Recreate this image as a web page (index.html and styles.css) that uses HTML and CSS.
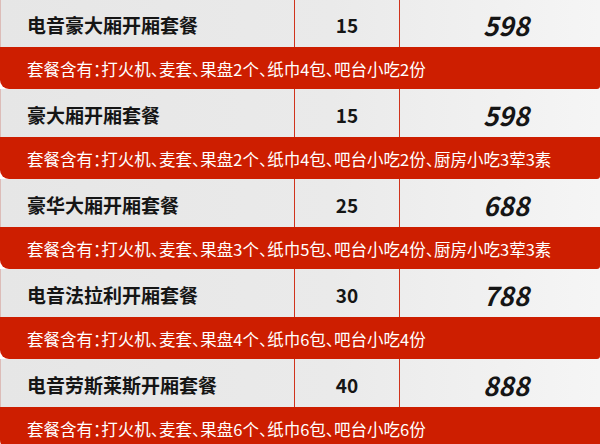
FILE: index.html
```html
<!DOCTYPE html>
<html lang="zh-CN">
<head>
<meta charset="utf-8">
<link rel="stylesheet" href="styles.css">
</head>
<body>
<div class="list">
  <section class="pkg">
    <div class="row">
      <div class="name">电音豪大厢开厢套餐</div>
      <div class="qty">15</div>
      <div class="price">598</div>
    </div>
    <div class="desc">套餐含有：打火机、麦套、果盘2个、纸巾4包、吧台小吃2份</div>
  </section>
  <section class="pkg">
    <div class="row">
      <div class="name">豪大厢开厢套餐</div>
      <div class="qty">15</div>
      <div class="price">598</div>
    </div>
    <div class="desc">套餐含有：打火机、麦套、果盘2个、纸巾4包、吧台小吃2份、厨房小吃3荤3素</div>
  </section>
  <section class="pkg">
    <div class="row">
      <div class="name">豪华大厢开厢套餐</div>
      <div class="qty">25</div>
      <div class="price">688</div>
    </div>
    <div class="desc">套餐含有：打火机、麦套、果盘3个、纸巾5包、吧台小吃4份、厨房小吃3荤3素</div>
  </section>
  <section class="pkg">
    <div class="row">
      <div class="name">电音法拉利开厢套餐</div>
      <div class="qty">30</div>
      <div class="price">788</div>
    </div>
    <div class="desc">套餐含有：打火机、麦套、果盘4个、纸巾6包、吧台小吃4份</div>
  </section>
  <section class="pkg">
    <div class="row">
      <div class="name">电音劳斯莱斯开厢套餐</div>
      <div class="qty">40</div>
      <div class="price">888</div>
    </div>
    <div class="desc">套餐含有：打火机、麦套、果盘6个、纸巾6包、吧台小吃6份</div>
  </section>
</div>
</body>
</html>
```

FILE: styles.css
```css
html, body {
  margin: 0;
  padding: 0;
  background: #ffffff;
  overflow: hidden;
}

body {
  width: 600px;
  height: 444px;
  font-family: "Noto Sans CJK SC", "Noto Sans", sans-serif;
}

.list {
  display: flex;
  flex-direction: column;
  margin-top: -1px;
}

.pkg {
  display: flex;
  flex-direction: column;
}

.row {
  height: 48px;
  display: grid;
  grid-template-columns: 294px 105px 1fr;
  background: linear-gradient(90deg, #e6e6e6 0%, #eaeaea 55%, #f5f5f5 100%);
  border-left: 1px solid #dcbcb8;
  box-sizing: border-box;
}

.name,
.qty,
.price {
  display: flex;
  align-items: center;
  padding-top: 3px;
  box-sizing: border-box;
  color: #151515;
  font-weight: 700;
}

.name {
  padding-left: 26px;
  font-size: 19px;
  border-right: 1px solid #d0331c;
}

.qty {
  justify-content: center;
  font-size: 19px;
  border-right: 1px solid #d0331c;
}

.price {
  justify-content: center;
  padding-left: 12px;
  font-size: 26px;
  font-style: italic;
}

.desc {
  height: 42px;
  display: flex;
  align-items: center;
  padding-left: 27px;
  padding-top: 1px;
  box-sizing: border-box;
  background: #cd1e00;
  color: #ffffff;
  font-size: 16.5px;
  font-feature-settings: "halt" 1;
  border-radius: 0 0 3px 9px;
  white-space: nowrap;
}
```
